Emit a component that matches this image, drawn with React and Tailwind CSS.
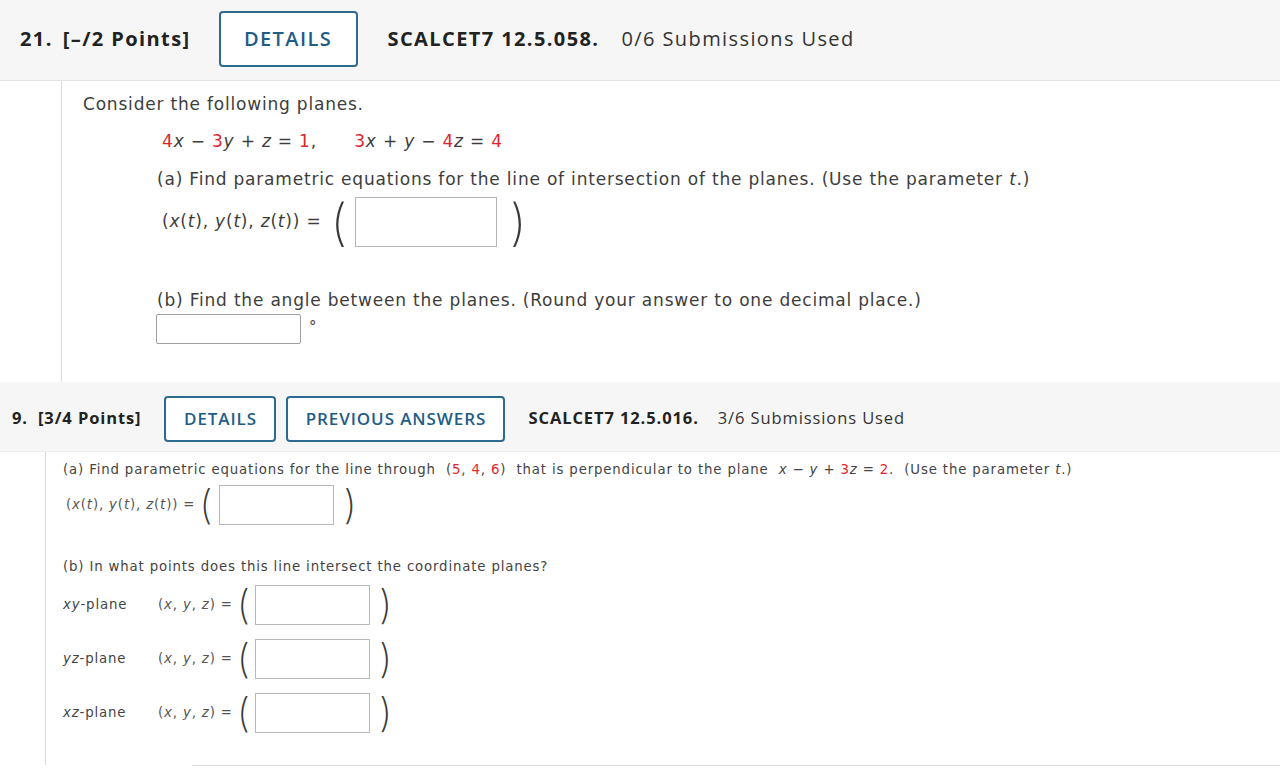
import React from 'react';

const body = { fontFamily: '"DejaVu Sans", Verdana, sans-serif' };
const head = { fontFamily: '"Open Sans", "Noto Sans", sans-serif' };

function R({ children }) {
  return <span className="text-[#e0262b]">{children}</span>;
}

function V({ children }) {
  return <i>{children}</i>;
}

function Paren({ side, size }) {
  return (
    <span
      className={`inline-block font-extralight leading-none tracking-normal text-[#3a3a3a] ${size}`}
      style={{ fontFamily: 'Inter, "DejaVu Sans", sans-serif' }}
    >
      {side}
    </span>
  );
}

function Btn({ children, className }) {
  return (
    <div
      className={`flex items-center justify-center rounded-[4px] border-2 border-[#2c6b8f] bg-white text-[#1e5d87] ${className}`}
    >
      {children}
    </div>
  );
}

function Q21() {
  return (
    <section className="h-[382px] bg-white">
      <header
        className="flex h-[81px] items-start border-b border-[#e3e3e3] bg-[#f6f6f6] pt-[11px] tracking-[1.4px] text-[#222]"
        style={head}
      >
        <div className="flex h-[56px] items-center pl-[20px] text-[20px]">
          <span className="font-bold">21.</span>
          <span className="ml-[10px] font-bold">[–/2 Points]</span>
        </div>
        <Btn className="ml-[28px] h-[56px] w-[139px] text-[20px] font-semibold">DETAILS</Btn>
        <div className="flex h-[56px] items-center text-[20px]">
          <span className="ml-[30px] font-bold">SCALCET7 12.5.058.</span>
          <span className="ml-[22px] text-[#333]">0/6 Submissions Used</span>
        </div>
      </header>
      <div
        className="ml-[61px] h-[301px] border-l border-[#dcdcdc] pl-[21px] text-[17px] tracking-[0.8px] text-[#3d3d3d]"
        style={body}
      >
        <p className="pt-[12px] leading-[22px]">Consider the following planes.</p>
        <p className="mt-[15px] pl-[79px] leading-[22px]">
          <R>4</R><V>x</V> − <R>3</R><V>y</V> + <V>z</V> = <R>1</R>,{'\u00a0\u00a0\u00a0\u00a0\u00a0\u00a0'}<R>3</R><V>x</V> + <V>y</V> − <R>4</R><V>z</V> = <R>4</R>
        </p>
        <p className="mt-[16px] pl-[74px] leading-[22px]">
          (a) Find parametric equations for the line of intersection of the planes. (Use the parameter <V>t</V>.)
        </p>
        <div className="mt-[7px] flex items-center pl-[79px]">
          <span>
            (<V>x</V>(<V>t</V>), <V>y</V>(<V>t</V>), <V>z</V>(<V>t</V>)) =
          </span>
          <Paren side="(" size="ml-[9px] text-[50px]" />
          <div className="ml-[8px] h-[50px] w-[142px] border border-[#b5b5b5] bg-white" />
          <Paren side=")" size="ml-[13px] text-[50px]" />
        </div>
        <p className="mt-[42px] pl-[74px] leading-[22px]">
          (b) Find the angle between the planes. (Round your answer to one decimal place.)
        </p>
        <div className="mt-[3px] flex items-center pl-[73px]">
          <div className="h-[30px] w-[145px] rounded-[2px] border border-[#9e9e9e] bg-white" />
          <span className="ml-[8px] mt-[-4px] text-[15px] tracking-normal">°</span>
        </div>
      </div>
    </section>
  );
}

function PlaneRow({ label }) {
  return (
    <div className="flex h-[54px] items-center">
      <span className="w-[95px]">
        <V>{label[0]}</V>
        <V>{label[1]}</V>-plane
      </span>
      <span className="text-[#555]">
        (<V>x</V>, <V>y</V>, <V>z</V>) =
      </span>
      <Paren side="(" size="ml-[4px] text-[40px]" />
      <div className="ml-[5px] h-[40px] w-[115px] border border-[#b8b8b8] bg-white" />
      <Paren side=")" size="ml-[9px] text-[40px]" />
    </div>
  );
}

function Q9() {
  return (
    <section className="h-[388px] bg-white">
      <header
        className="flex h-[70px] items-center border-b border-[#ececec] bg-[#f6f6f6] pt-[4px] tracking-[0.9px] text-[#222]"
        style={head}
      >
        <span className="ml-[12px] text-[16.5px] font-bold">9.</span>
        <span className="ml-[10px] text-[16.5px] font-bold">[3/4 Points]</span>
        <Btn className="ml-[23px] h-[46px] w-[112px] text-[17px] font-semibold">DETAILS</Btn>
        <Btn className="ml-[10px] h-[46px] w-[219px] text-[17px] font-semibold">PREVIOUS ANSWERS</Btn>
        <span className="ml-[23px] text-[16.5px] font-bold">SCALCET7 12.5.016.</span>
        <span className="ml-[19px] text-[16.5px] text-[#333]">3/6 Submissions Used</span>
      </header>
      <div
        className="ml-[45px] h-[313px] border-l border-[#dcdcdc] pl-[17px] text-[13.3px] tracking-[0.85px] text-[#444]"
        style={body}
      >
        <p className="pt-[8px] leading-[20px]">
          (a) Find parametric equations for the line through{'\u00a0 '}(<R>5</R>, <R>4</R>, <R>6</R>){'\u00a0 '}that is perpendicular to the plane{'\u00a0 '}
          <V>x</V> − <V>y</V> + <R>3</R><V>z</V> = <R>2</R>.{'\u00a0 '}(Use the parameter <V>t</V>.)
        </p>
        <div className="mt-[5px] flex items-center pl-[3px]">
          <span className="text-[#555]">
            (<V>x</V>(<V>t</V>), <V>y</V>(<V>t</V>), <V>z</V>(<V>t</V>)) =
          </span>
          <Paren side="(" size="ml-[4px] text-[40px]" />
          <div className="ml-[6px] h-[40px] w-[115px] border border-[#b8b8b8] bg-white" />
          <Paren side=")" size="ml-[10px] text-[40px]" />
        </div>
        <p className="mt-[32px] leading-[20px]">(b) In what points does this line intersect the coordinate planes?</p>
        <div className="mt-[1px]">
          <PlaneRow label="xy" />
          <PlaneRow label="yz" />
          <PlaneRow label="xz" />
        </div>
      </div>
      <div className="ml-[192px] border-t border-[#dcdcdc]" />
    </section>
  );
}

export default function App() {
  return (
    <div className="h-[770px] w-[1280px] overflow-hidden bg-white">
      <Q21 />
      <Q9 />
    </div>
  );
}
